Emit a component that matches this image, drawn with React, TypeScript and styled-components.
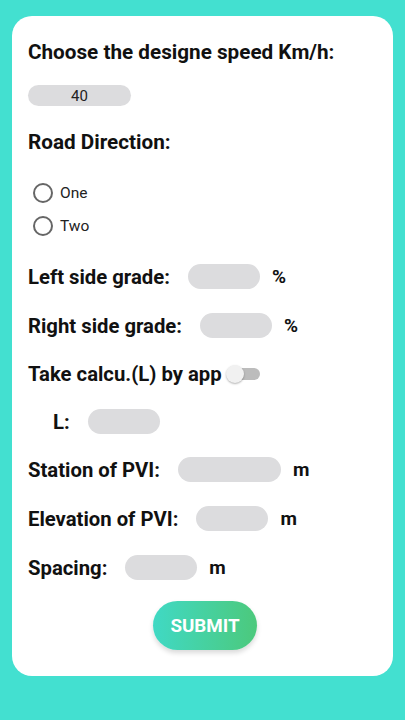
import styled, { createGlobalStyle } from "styled-components";

const GlobalStyle = createGlobalStyle`
  html, body {
    margin: 0;
    padding: 0;
    background: #43e0d0;
    font-family: Roboto, "Liberation Sans", sans-serif;
  }
`;

const Page = styled.div`
  width: 405px;
  height: 720px;
  box-sizing: border-box;
  padding: 16px 12px 0;
  background: #43e0d0;
`;

const Card = styled.form`
  background: #ffffff;
  border-radius: 20px;
  padding: 24px 16px 26px;
  display: flex;
  flex-direction: column;
`;

const Heading = styled.div<{ $top?: number }>`
  font-size: 20.7px;
  font-weight: 700;
  color: #111;
  line-height: 24px;
  margin-top: ${(p) => p.$top ?? 0}px;
`;

const SpeedPill = styled.div`
  margin-top: 21px;
  width: 103px;
  height: 21px;
  border-radius: 11px;
  background: #dcdcde;
  display: flex;
  align-items: center;
  justify-content: center;
  font-size: 15px;
  color: #222;
`;

const RadioGroup = styled.div`
  margin-top: 22px;
  padding-left: 5px;
  display: flex;
  flex-direction: column;
`;

const RadioRow = styled.label`
  height: 33px;
  display: flex;
  align-items: center;
  gap: 7px;
  font-size: 15.5px;
  color: #222;
`;

const RadioCircle = styled.span`
  width: 16px;
  height: 16px;
  border-radius: 50%;
  border: 2px solid #666;
`;

const Row = styled.div<{ $top?: number; $indent?: number }>`
  margin-top: ${(p) => p.$top ?? 23}px;
  padding-left: ${(p) => p.$indent ?? 0}px;
  height: 25px;
  display: flex;
  align-items: center;
`;

const Label = styled.span`
  font-size: 20.3px;
  font-weight: 700;
  color: #111;
  white-space: nowrap;
`;

const Field = styled.div<{ $w?: number }>`
  margin-left: 18px;
  width: ${(p) => p.$w ?? 72}px;
  height: 25px;
  border-radius: 13px;
  background: #dcdcde;
`;

const Unit = styled.span`
  margin-left: 12px;
  font-size: 19px;
  font-weight: 700;
  color: #111;
`;

const Switch = styled.div`
  position: relative;
  margin-left: 4px;
  width: 34px;
  height: 18px;
  display: flex;
  align-items: center;
`;

const Track = styled.div`
  margin-left: 5px;
  width: 29px;
  height: 12px;
  border-radius: 6px;
  background: #bcbcbc;
`;

const Thumb = styled.div`
  position: absolute;
  left: 0;
  top: 0;
  width: 18px;
  height: 18px;
  border-radius: 50%;
  background: #f1f1f1;
  box-shadow: 0 1px 2px rgba(0, 0, 0, 0.3);
`;

const SubmitButton = styled.button`
  align-self: center;
  margin: 21px 0 0 5px;
  width: 104px;
  height: 49px;
  border: none;
  border-radius: 25px;
  background: linear-gradient(90deg, #40d9c4, #4cc97c);
  color: #fff;
  font-family: Roboto, "Liberation Sans", sans-serif;
  font-size: 18.8px;
  font-weight: 700;
  box-shadow: 0 3px 5px rgba(0, 0, 0, 0.15);
`;

export default function App() {
  return (
    <Page>
      <GlobalStyle />
      <Card onSubmit={(e) => e.preventDefault()}>
        <Heading>Choose the designe speed Km/h:</Heading>
        <SpeedPill>40</SpeedPill>
        <Heading $top={24}>Road Direction:</Heading>
        <RadioGroup>
          <RadioRow>
            <RadioCircle />
            One
          </RadioRow>
          <RadioRow>
            <RadioCircle />
            Two
          </RadioRow>
        </RadioGroup>
        <Row $top={22}>
          <Label>Left side grade:</Label>
          <Field />
          <Unit>%</Unit>
        </Row>
        <Row $top={24}>
          <Label>Right side grade:</Label>
          <Field />
          <Unit>%</Unit>
        </Row>
        <Row>
          <Label>Take calcu.(L) by app</Label>
          <Switch>
            <Track />
            <Thumb />
          </Switch>
        </Row>
        <Row $indent={25}>
          <Label>L:</Label>
          <Field />
        </Row>
        <Row>
          <Label>Station of PVI:</Label>
          <Field $w={103} />
          <Unit>m</Unit>
        </Row>
        <Row $top={24}>
          <Label>Elevation of PVI:</Label>
          <Field />
          <Unit>m</Unit>
        </Row>
        <Row $top={24}>
          <Label>Spacing:</Label>
          <Field />
          <Unit>m</Unit>
        </Row>
        <SubmitButton type="submit">SUBMIT</SubmitButton>
      </Card>
    </Page>
  );
}
